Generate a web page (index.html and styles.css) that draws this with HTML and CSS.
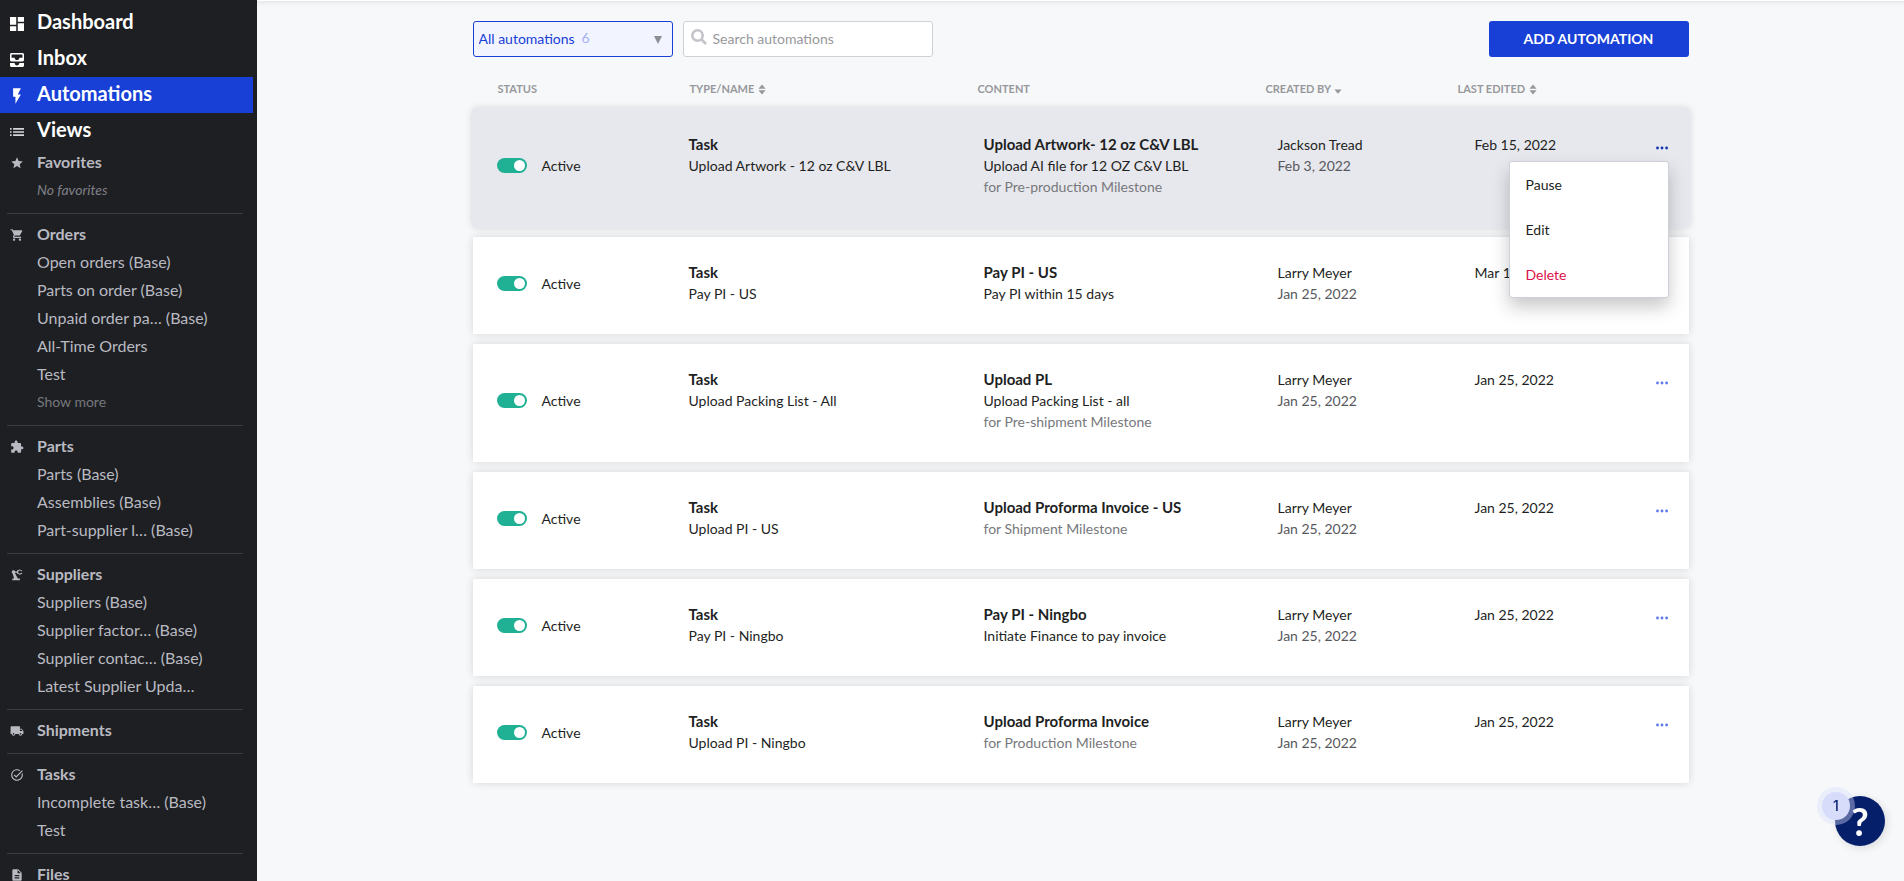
FILE: index.html
```html
<!DOCTYPE html>
<html lang="en">
<head>
<meta charset="utf-8">
<meta name="viewport" content="width=device-width, initial-scale=1">
<title>Automations</title>
<link rel="stylesheet" href="styles.css">
</head>
<body>
<svg class="sprite" aria-hidden="true">
  <symbol id="i-sort" viewBox="0 0 8 11"><path d="M4 0.5 7.6 4.7H.4zM.4 6.3h7.2L4 10.5z"/></symbol>
  <symbol id="i-dots" viewBox="0 0 14 4"><circle cx="2.5" cy="2" r="1.4"/><circle cx="7" cy="2" r="1.4"/><circle cx="11.6" cy="2" r="1.4"/></symbol>
</svg>
<div class="app">
  <aside class="sidebar">
    <nav class="nav" aria-label="Main">
      <a class="nav-link" href="#"><svg class="icon-lg" viewBox="3 3 18 18"><path d="M3 13h8V3H3v10zm0 8h8v-6H3v6zm10 0h8V11h-8v10zm0-18v6h8V3h-8z"/></svg>Dashboard</a>
      <a class="nav-link" href="#"><svg class="icon-lg" viewBox="3 3 18 18"><path d="M19 3H5c-1.100 0-2 .9-2 2v7c0 1.100.9 2 2 2h14c1.100 0 2-.9 2-2V5c0-1.100-.9-2-2-2zm0 6h-4c0 1.620-1.380 3-3 3s-3-1.380-3-3H5V5h14v4zm-4 7h6v3c0 1.100-.9 2-2 2H5c-1.100 0-2-.9-2-2v-3h6c0 1.660 1.340 3 3 3s3-1.340 3-3z"/></svg>Inbox</a>
      <a class="nav-link active" href="#" aria-current="page"><svg class="icon-lg" viewBox="3 3 18 18"><path d="M7 2v11h3v9l7-12h-4l4-8z"/></svg>Automations</a>
      <a class="nav-link dim" href="#"><svg class="icon-lg" viewBox="3 3 18 18"><path d="M3 13h2v-2H3v2zm0 4h2v-2H3v2zm0-8h2V7H3v2zm4 4h14v-2H7v2zm0 4h14v-2H7v2zM7 7v2h14V7H7z"/></svg>Views</a>
    </nav>
    <section class="group first">
      <h2><svg class="icon" viewBox="0 0 24 24"><path d="M12 17.270L18.180 21l-1.640-7.030L22 9.240l-7.190-.61L12 2 9.190 8.630 2 9.240l5.460 4.730L5.820 21z"/></svg>Favorites</h2>
      <p class="empty">No favorites</p>
    </section>
    <section class="group">
      <h2><svg class="icon" viewBox="0 0 24 24"><path d="M7 18c-1.100 0-1.990.9-1.990 2S5.900 22 7 22s2-.9 2-2-.9-2-2-2zM1 2v2h2l3.600 7.590-1.350 2.450c-.16.28-.25.61-.25.96 0 1.100.9 2 2 2h12v-2H7.420c-.14 0-.25-.11-.25-.25l.03-.12.9-1.630h7.450c.75 0 1.410-.41 1.750-1.030l3.580-6.490c.08-.14.12-.31.12-.48 0-.55-.45-1-1-1H5.210l-.94-2H1zm16 16c-1.100 0-1.990.9-1.990 2s.89 2 1.990 2 2-.9 2-2-.9-2-2-2z"/></svg>Orders</h2>
      <a href="#">Open orders (Base)</a>
      <a href="#">Parts on order (Base)</a>
      <a href="#">Unpaid order pa… (Base)</a>
      <a href="#">All-Time Orders</a>
      <a href="#">Test</a>
      <button class="more" type="button">Show more</button>
    </section>
    <section class="group">
      <h2><svg class="icon" viewBox="0 0 24 24"><path d="M20.500 11H19V7c0-1.100-.9-2-2-2h-4V3.500C13 2.120 11.880 1 10.500 1S8 2.120 8 3.500V5H4c-1.100 0-1.990.9-1.990 2v3.800H3.500c1.490 0 2.700 1.210 2.700 2.700s-1.210 2.700-2.700 2.700H2V20c0 1.100.9 2 2 2h3.800v-1.500c0-1.490 1.210-2.700 2.700-2.700 1.490 0 2.700 1.210 2.700 2.700V22H17c1.100 0 2-.9 2-2v-4h1.500c1.380 0 2.500-1.120 2.500-2.500S21.880 11 20.500 11z"/></svg>Parts</h2>
      <a href="#">Parts (Base)</a>
      <a href="#">Assemblies (Base)</a>
      <a href="#">Part-supplier l… (Base)</a>
    </section>
    <section class="group">
      <h2><svg class="icon" viewBox="0 0 24 24"><path d="M19.930 8.350l-3.600 1.680L14 7.700V6.300l2.330-2.330 3.600 1.680c.38.18.82.01 1-.36.18-.38.01-.82-.36-1l-3.920-1.830c-.38-.18-.83-.1-1.130.2L13.780 4.400C13.600 4.160 13.320 4 13 4c-.55 0-1 .45-1 1v1H8.820C8.340 4.650 6.980 3.730 5.400 4.070 4.240 4.320 3.250 5.320 3.040 6.500c-.22 1.320.46 2.470 1.480 3.080L7.080 18H4v3h13v-3h-3.620L8.410 8.770c.17-.24.31-.49.41-.77H12v1c0 .55.45 1 1 1 .32 0 .6-.16.78-.4l1.740 1.740c.3.3.75.38 1.130.2l3.920-1.830c.38-.18.54-.62.36-1-.18-.37-.62-.54-1-.36z"/></svg>Suppliers</h2>
      <a href="#">Suppliers (Base)</a>
      <a href="#">Supplier factor… (Base)</a>
      <a href="#">Supplier contac… (Base)</a>
      <a href="#">Latest Supplier Upda…</a>
    </section>
    <section class="group">
      <h2><svg class="icon" viewBox="0 0 24 24"><path d="M20 8h-3V4H3c-1.100 0-2 .9-2 2v11h2c0 1.660 1.340 3 3 3s3-1.340 3-3h6c0 1.660 1.340 3 3 3s3-1.340 3-3h2v-5l-3-4zM6 18.500c-.83 0-1.500-.67-1.500-1.500s.67-1.500 1.500-1.500 1.500.67 1.500 1.500-.67 1.500-1.500 1.500zm13.500-9l1.960 2.500H17V9.500h2.500zm-1.500 9c-.83 0-1.500-.67-1.500-1.500s.67-1.500 1.500-1.500 1.500.67 1.500 1.500-.67 1.500-1.500 1.500z"/></svg>Shipments</h2>
    </section>
    <section class="group">
      <h2><svg class="icon" viewBox="0 0 24 24"><path d="M22 5.180L10.590 16.600l-4.240-4.240 1.410-1.410 2.830 2.830 10-10L22 5.180zm-2.210 5.040c.13.57.21 1.170.21 1.780 0 4.420-3.580 8-8 8s-8-3.580-8-8 3.580-8 8-8c1.580 0 3.040.46 4.280 1.250l1.440-1.440C16.100 2.670 14.130 2 12 2 6.480 2 2 6.480 2 12s4.480 10 10 10 10-4.480 10-10c0-1.190-.22-2.330-.6-3.390l-1.610 1.610z"/></svg>Tasks</h2>
      <a href="#">Incomplete task… (Base)</a>
      <a href="#">Test</a>
    </section>
    <section class="group">
      <h2><svg class="icon" viewBox="0 0 24 24"><path d="M14 2H6c-1.100 0-1.990.9-1.990 2L4 20c0 1.100.89 2 1.990 2H18c1.100 0 2-.9 2-2V8l-6-6zm2 16H8v-2h8v2zm0-4H8v-2h8v2zm-3-5V3.500L18.500 9H13z"/></svg>Files</h2>
    </section>
  </aside>

  <main class="main">
    <div class="content">
      <div class="toolbar">
        <div class="filter">
          <select aria-label="Filter automations"><option>All automations</option></select>
          <span class="filter-count">6</span>
          <svg class="filter-arrow" viewBox="0 0 8 8"><path d="M0 0h8L4 8z"/></svg>
        </div>
        <label class="search">
          <svg class="search-icon" viewBox="0 0 16 16"><circle cx="6.500" cy="6.500" r="5.200"/><path d="M10.500 10.500l4.500 4.500"/></svg>
          <input type="search" placeholder="Search automations" aria-label="Search automations">
        </label>
        <button class="add" type="button">ADD AUTOMATION</button>
      </div>

      <table class="list">
        <thead>
          <tr>
            <th scope="col">STATUS</th>
            <th scope="col">TYPE/NAME <svg class="sort" viewBox="0 0 8 11"><use href="#i-sort"/></svg></th>
            <th scope="col">CONTENT</th>
            <th scope="col">CREATED BY <svg class="sort" viewBox="0 0 8 11"><path d="M.4 5.500h7.200L4 9.700z"/></svg></th>
            <th scope="col">LAST EDITED <svg class="sort" viewBox="0 0 8 11"><use href="#i-sort"/></svg></th>
          </tr>
        </thead>
        <tbody>
          <tr class="selected">
            <td class="status"><label><input type="checkbox" role="switch" checked>Active</label></td>
            <td><b>Task</b><span>Upload Artwork - 12 oz C&amp;V LBL</span></td>
            <td><b>Upload Artwork- 12 oz C&amp;V LBL</b><span>Upload AI file for 12 OZ C&amp;V LBL</span><span class="muted">for Pre-production Milestone</span></td>
            <td><span>Jackson Tread</span><span class="muted dark">Feb 3, 2022</span></td>
            <td>Feb 15, 2022</td>
            <td class="actions"><button class="dots" type="button" aria-label="Options" aria-expanded="true"><svg viewBox="0 0 14 4"><use href="#i-dots"/></svg></button>
              <div class="menu" role="menu">
                <button type="button" role="menuitem">Pause</button>
                <button type="button" role="menuitem">Edit</button>
                <button class="danger" type="button" role="menuitem">Delete</button>
              </div>
            </td>
          </tr>
          <tr>
            <td class="status"><label><input type="checkbox" role="switch" checked>Active</label></td>
            <td><b>Task</b><span>Pay PI - US</span></td>
            <td><b>Pay PI - US</b><span>Pay PI within 15 days</span></td>
            <td><span>Larry Meyer</span><span class="muted dark">Jan 25, 2022</span></td>
            <td>Mar 1</td>
            <td class="actions"></td>
          </tr>
          <tr>
            <td class="status"><label><input type="checkbox" role="switch" checked>Active</label></td>
            <td><b>Task</b><span>Upload Packing List - All</span></td>
            <td><b>Upload PL</b><span>Upload Packing List - all</span><span class="muted">for Pre-shipment Milestone</span></td>
            <td><span>Larry Meyer</span><span class="muted dark">Jan 25, 2022</span></td>
            <td>Jan 25, 2022</td>
            <td class="actions"><button class="dots" type="button" aria-label="Options"><svg viewBox="0 0 14 4"><use href="#i-dots"/></svg></button></td>
          </tr>
          <tr>
            <td class="status"><label><input type="checkbox" role="switch" checked>Active</label></td>
            <td><b>Task</b><span>Upload PI - US</span></td>
            <td><b>Upload Proforma Invoice - US</b><span class="muted">for Shipment Milestone</span></td>
            <td><span>Larry Meyer</span><span class="muted dark">Jan 25, 2022</span></td>
            <td>Jan 25, 2022</td>
            <td class="actions"><button class="dots" type="button" aria-label="Options"><svg viewBox="0 0 14 4"><use href="#i-dots"/></svg></button></td>
          </tr>
          <tr>
            <td class="status"><label><input type="checkbox" role="switch" checked>Active</label></td>
            <td><b>Task</b><span>Pay PI - Ningbo</span></td>
            <td><b>Pay PI - Ningbo</b><span>Initiate Finance to pay invoice</span></td>
            <td><span>Larry Meyer</span><span class="muted dark">Jan 25, 2022</span></td>
            <td>Jan 25, 2022</td>
            <td class="actions"><button class="dots" type="button" aria-label="Options"><svg viewBox="0 0 14 4"><use href="#i-dots"/></svg></button></td>
          </tr>
          <tr>
            <td class="status"><label><input type="checkbox" role="switch" checked>Active</label></td>
            <td><b>Task</b><span>Upload PI - Ningbo</span></td>
            <td><b>Upload Proforma Invoice</b><span class="muted">for Production Milestone</span></td>
            <td><span>Larry Meyer</span><span class="muted dark">Jan 25, 2022</span></td>
            <td>Jan 25, 2022</td>
            <td class="actions"><button class="dots" type="button" aria-label="Options"><svg viewBox="0 0 14 4"><use href="#i-dots"/></svg></button></td>
          </tr>
        </tbody>
      </table>
    </div>
  </main>
</div>
<button class="help" type="button" aria-label="Help, 1 notification">?<span class="help-badge">1</span></button>
</body>
</html>
```
FILE: styles.css
```css
* { box-sizing: border-box; }

body {
  margin: 0;
  font-family: Lato, "Open Sans", sans-serif;
  font-size: 14px;
  line-height: 21px;
  color: #1e1f23;
  background: #f7f8fa;
}

button, input, select { font: inherit; color: inherit; }
button { border: 0; padding: 0; background: none; cursor: pointer; }
a { color: inherit; text-decoration: none; }
svg { fill: currentColor; flex: none; }

.sprite { position: absolute; width: 0; height: 0; }

.app { display: flex; height: 100vh; }

/* Sidebar */
.sidebar {
  flex: 0 0 257px;
  overflow: hidden;
  padding-top: 5px;
  background: #1e1f23;
  color: #b9bac1;
}

.nav { display: flex; flex-direction: column; }

.nav-link {
  display: flex;
  align-items: center;
  gap: 13px;
  height: 36px;
  margin-right: 4px;
  padding: 0 0 4px 10px;
  font-size: 20px;
  font-weight: 700;
  color: #fff;
}
.nav-link.active { background: #1840d6; }
.nav-link.dim svg { color: #d5d6da; }

.icon-lg { width: 14px; height: 14px; margin-top: 6px; overflow: visible; }
.icon { width: 14px; height: 14px; margin-top: 2px; }

.group {
  display: flex;
  flex-direction: column;
  align-items: flex-start;
  margin: 0 14px 0 7px;
  padding: 6px 0 9px;
  border-top: 1px solid #3c3d42;
  font-size: 16px;
  line-height: 28px;
}
.group.first { margin-top: -1px; padding: 0 0 9px; border: 0; }

.group h2 {
  display: flex;
  align-items: center;
  gap: 13px;
  margin: 0;
  padding-left: 3px;
  font-size: 16px;
  font-weight: 700;
}
.group > a, .empty, .more { padding-left: 30px; }
.empty { margin: 0; font-size: 14px; font-style: italic; color: #7e7f86; }
.more { font-size: 14px; line-height: 28px; color: #77787e; }

/* Main area */
.main {
  flex: 1;
  min-width: 0;
  overflow: hidden;
  padding: 0 24px;
  border-top: 1px solid #fff;
  background: #f7f8fa;
  box-shadow: inset 0 5px 5px -4px #dfe0e3;
}
.content { max-width: 1216px; margin: 0 auto; padding-top: 20px; }

.toolbar { display: flex; gap: 10px; height: 36px; }

.filter { position: relative; width: 200px; }
.filter select {
  width: 100%;
  height: 100%;
  padding: 0 5px 2px;
  border: 1px solid #1840d6;
  border-radius: 3px;
  background: #f2f5ff;
  color: #1840d6;
  appearance: none;
}
.filter-count { position: absolute; top: 6px; left: 109px; color: #a3b1f3; pointer-events: none; }
.filter-arrow { position: absolute; top: 15px; right: 11px; width: 8px; height: 8px; color: #8d8f94; pointer-events: none; }

.search {
  display: flex;
  align-items: center;
  gap: 6px;
  width: 250px;
  padding: 0 7px 2px;
  border: 1px solid #cdd0d5;
  border-radius: 3px;
  background: #fff;
}
.search-icon { width: 16px; height: 16px; margin-bottom: 2px; fill: none; stroke: #c3c5ca; stroke-width: 2.600; }
.search input { flex: 1; min-width: 0; padding: 0; border: 0; outline: 0; background: none; }
.search input::placeholder { color: #97989c; }

.add {
  width: 200px;
  margin-left: auto;
  padding-bottom: 2px;
  border-radius: 3px;
  background: #1840d6;
  color: #fff;
  font-weight: 700;
}

/* Automation list */
.list, .list tbody { display: flex; flex-direction: column; }
.list tbody { gap: 10px; }
.list th, .list td { display: block; min-width: 0; padding: 0; text-align: left; }

.list thead tr {
  display: grid;
  grid-template-columns: 192fr 288fr 288fr 192fr 208fr;
  padding: 21px 23px 10px 25px;
}
.list th { font-size: 11px; font-weight: 700; color: #97989c; }
.sort { width: 8px; height: 11px; margin-left: 1px; vertical-align: -2px; }

.list tbody tr {
  display: grid;
  grid-template-columns: 192fr 295fr 294fr 197fr 180fr 14px;
  padding: 25px 20px 30px 24px;
  background: #fff;
  box-shadow: 0 0 8px rgba(0, 0, 0, 0.14);
}
.list tbody tr.selected {
  border-radius: 3px;
  background: #e7e8ed;
  box-shadow: 0 0 0 1px #e7e8ed, 0 0 9px rgba(0, 0, 0, 0.18);
}
.list td b, .list td span { display: block; }
.list td b { font-size: 15px; }
.muted { color: #77787c; }
.muted.dark { color: #57585d; }

.status { align-self: center; }
.status label { display: flex; align-items: center; gap: 15px; }
.status input {
  display: flex;
  justify-content: flex-end;
  align-items: center;
  width: 30px;
  height: 15px;
  margin: 0;
  padding: 0 2px;
  border-radius: 8px;
  background: #20b094;
  appearance: none;
}
.status input::before { content: ""; width: 11px; height: 11px; border-radius: 50%; background: #fff; }

.list td.actions { position: relative; height: 28px; }
.dots { display: flex; align-items: center; width: 14px; height: 28px; color: #5b78e8; }
.dots svg { width: 14px; height: 4px; }
.selected .dots { color: #1235ae; }

.menu {
  position: absolute;
  z-index: 2;
  top: 27px;
  right: 0;
  display: flex;
  flex-direction: column;
  width: 160px;
  border: 1px solid #cdd0d8;
  border-radius: 3px;
  background: #fff;
  box-shadow: 0 9px 18px rgba(0, 0, 0, 0.22);
}
.menu button { padding: 12px 16px; text-align: left; }
.menu .danger { color: #db1048; }

/* Help launcher */
.help {
  position: fixed;
  right: 19px;
  bottom: 35px;
  width: 50px;
  height: 50px;
  border-radius: 50%;
  background: #061f6b;
  color: #fff;
  font: 700 38px/50px Lato, sans-serif;
  box-shadow: 2px 2px 8px rgba(0, 0, 0, 0.12);
}
.help-badge {
  position: absolute;
  top: -4px;
  left: -13px;
  width: 28px;
  height: 28px;
  border-radius: 50%;
  background: #d7dcfa;
  color: #061f6b;
  font: 500 14px/28px Inter, sans-serif;
  box-shadow: 0 0 0 5px rgba(215, 220, 250, 0.4);
}
```
